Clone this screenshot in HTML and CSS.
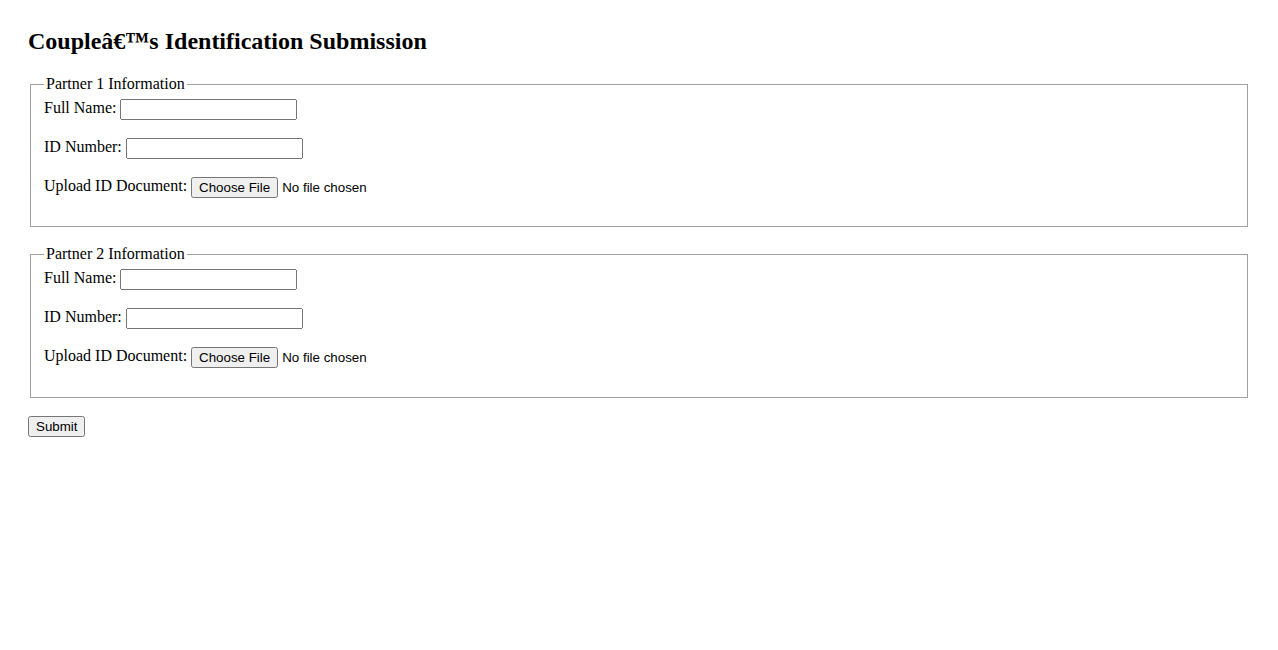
FILE: index.html
```html
<!DOCTYPE html>
<html lang="en">
<head>
  <meta charset="UTF-8" />
  <meta name="viewport" content="width=device-width, initial-scale=1.0"/>
  <title>Couple ID Submission</title>
  <link rel="stylesheet" href="styles.css">
</head>
<body>

  <h2>Coupleâ€™s Identification Submission</h2>

  <form class="id-form" onsubmit="return false;">
    <!-- Partner 1 -->
    <fieldset>
      <legend>Partner 1 Information</legend>
      <label for="name1">Full Name:</label>
      <input type="text" id="name1" name="name1" class="name-input" />
      <br><br>
      <label for="id1">ID Number:</label>
      <input type="text" id="id1" name="id1" class="id-input" />
      <br><br>
      <label for="doc1">Upload ID Document:</label>
      <input type="file" id="doc1" name="doc1" />
      <br><br>
    </fieldset>

    <!-- Partner 2 -->
    <fieldset>
      <legend>Partner 2 Information</legend>
      <label for="name2">Full Name:</label>
      <input type="text" id="name2" name="name2" class="name-input" />
      <br><br>
      <label for="id2">ID Number:</label>
      <input type="text" id="id2" name="id2" class="id-input" />
      <br><br>
      <label for="doc2">Upload ID Document:</label>
      <input type="file" id="doc2" name="doc2" />
      <br><br>
    </fieldset>

    <button type="submit" class="submit-btn">Submit</button>
  </form>

</body>
</html>
```

FILE: styles.css
```css
body {
  font-family: 'Liberation Serif', 'Times New Roman', serif;
  font-size: 16px;
  color: #000;
  background: #fff;
  margin: 0;
  padding: 28px;
}

h2 {
  font-size: 24px;
  margin: 0 0 20px;
}

fieldset {
  margin: 0 2px 18.2px;
  padding: 6px 13px 10.3px;
  border: 1px solid #a0a0a0;
}

legend {
  padding: 0 2px;
}

input,
button {
  font-family: 'Liberation Sans', Arial, sans-serif;
  font-size: 13.33px;
}

.name-input,
.id-input {
  width: 177px;
  height: 21px;
  box-sizing: border-box;
  vertical-align: -1px;
}

input[type="file"] {
  vertical-align: -1px;
}

.submit-btn {
  padding: 1px 6px;
}
```
